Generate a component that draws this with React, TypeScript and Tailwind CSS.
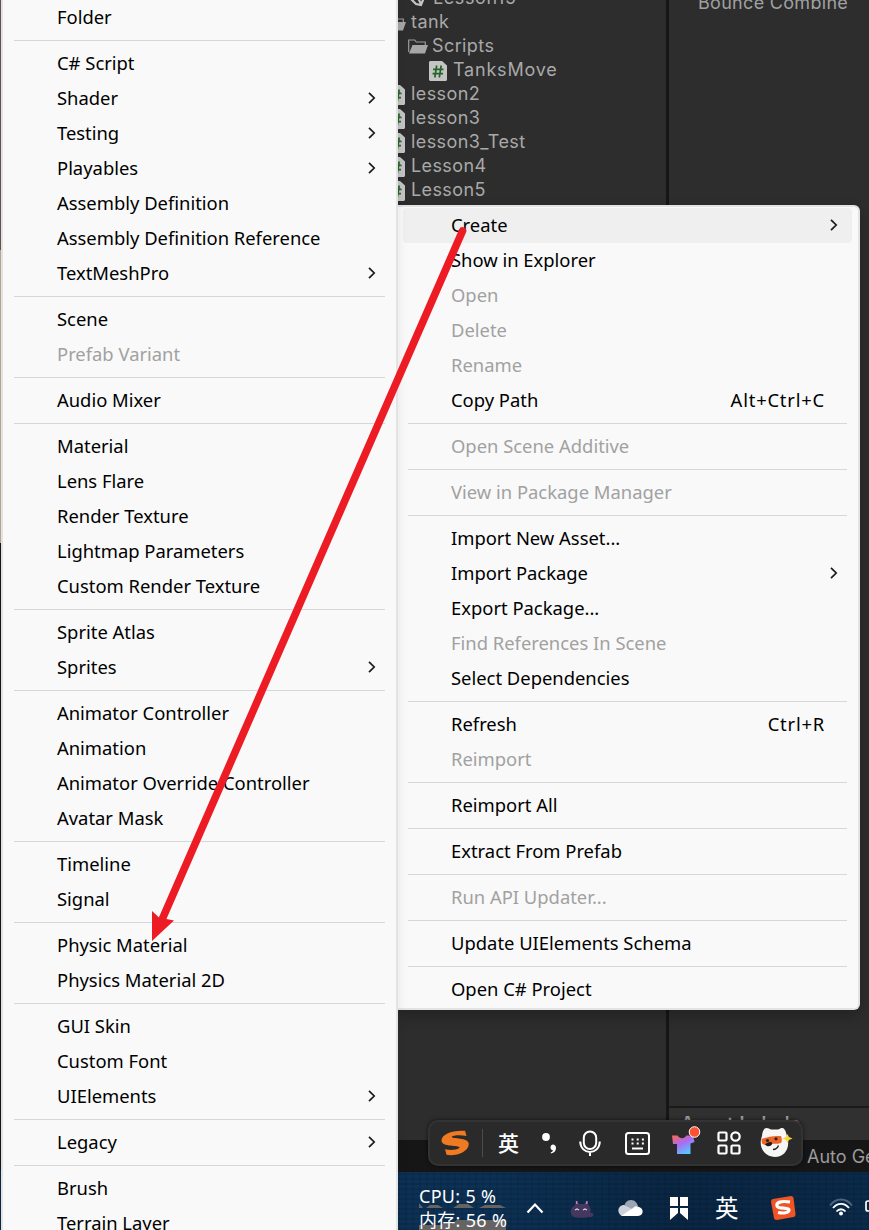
import React from "react";

type Entry = { t: string; off?: boolean; sub?: boolean; key?: string; hot?: boolean } | null;

const i = (t: string): Entry => ({ t });
const off = (t: string): Entry => ({ t, off: true });
const sub = (t: string): Entry => ({ t, sub: true });

const createMenu: Entry[] = [
  i("Folder"), null,
  i("C# Script"), sub("Shader"), sub("Testing"), sub("Playables"), i("Assembly Definition"),
  i("Assembly Definition Reference"), sub("TextMeshPro"), null,
  i("Scene"), off("Prefab Variant"), null,
  i("Audio Mixer"), null,
  i("Material"), i("Lens Flare"), i("Render Texture"), i("Lightmap Parameters"), i("Custom Render Texture"), null,
  i("Sprite Atlas"), sub("Sprites"), null,
  i("Animator Controller"), i("Animation"), i("Animator Override Controller"), i("Avatar Mask"), null,
  i("Timeline"), i("Signal"), null,
  i("Physic Material"), i("Physics Material 2D"), null,
  i("GUI Skin"), i("Custom Font"), sub("UIElements"), null,
  sub("Legacy"), null,
  i("Brush"), i("Terrain Layer"),
];

const assetMenu: Entry[] = [
  { t: "Create", sub: true, hot: true }, i("Show in Explorer"), off("Open"), off("Delete"), off("Rename"),
  { t: "Copy Path", key: "Alt+Ctrl+C" }, null,
  off("Open Scene Additive"), null,
  off("View in Package Manager"), null,
  i("Import New Asset..."), sub("Import Package"), i("Export Package..."), off("Find References In Scene"),
  i("Select Dependencies"), null,
  { t: "Refresh", key: "Ctrl+R" }, off("Reimport"), null,
  i("Reimport All"), null,
  i("Extract From Prefab"), null,
  off("Run API Updater..."), null,
  i("Update UIElements Schema"), null,
  i("Open C# Project"),
];

function Menu({ items }: { items: Entry[] }) {
  return (
    <ul className="flex flex-col">
      {items.map((e, n) =>
        e === null ? (
          <li key={n} className="flex h-[11px] shrink-0 px-[5px] pt-[5px]">
            <div className="h-px w-full bg-[#d7d7d7]" />
          </li>
        ) : (
          <li
            key={n}
            className={
              "flex h-[35px] shrink-0 items-center rounded-[4px] pl-12 pr-[13px] text-[18.4px] leading-[25px] whitespace-nowrap " +
              (e.hot ? "bg-[#efefef] " : "") + (e.off ? "text-[#a1a1a1]" : "text-black")
            }
          >
            <span className="pb-[2px]">{e.t}</span>
            {e.key && <span className="ml-auto pr-[14px] pb-[2px] tracking-[0.8px]">{e.key}</span>}
            {e.sub && (
              <svg className="ml-auto -mt-px" width="10" height="14" viewBox="0 0 10 14" fill="none" stroke="#1b1b1b" strokeWidth="1.700">
                <path d="M2 1.800 7.200 7 2 12.200" />
              </svg>
            )}
          </li>
        ),
      )}
    </ul>
  );
}

function ScriptIcon() {
  return (
    <svg width="18" height="20" viewBox="0 0 18 20" className="shrink-0">
      <path d="M1 0h12l5 4.500V19l-1 1H1l-1-1V1z" fill="#c4c4c4" />
      <path d="M7.700 4.500 5.800 16.500M12.200 4.500l-1.900 12M4 8.300h10.500M3.500 12.700H14" stroke="#276329" strokeWidth="1.700" />
    </svg>
  );
}

function FolderIcon() {
  return (
    <svg width="20" height="15" viewBox="0 0 20 15" className="shrink-0">
      <path d="M.7 13V1h6l1.600 2h9v3" fill="none" stroke="#9c9c9c" strokeWidth="1.200" />
      <path d="M4.500 6H20l-3 8.500H1z" fill="#a6a6a6" />
    </svg>
  );
}

function ProjectTree() {
  return (
    <div className="flex flex-col overflow-hidden text-[18px] leading-6 tracking-[0.4px] text-[#a9a9a9]">
      <div className="flex h-[10px] items-end gap-2 pl-[9px]">
        <svg width="18" height="22" viewBox="0 0 18 22" className="mb-[3px] shrink-0" fill="none" stroke="#c4c4c4" strokeWidth="2.200">
          <path d="M9 1 16 6v9l-2 5-5-1-7-7 8-3M9 9l5 10" />
        </svg>
        <span className="tracking-[0.6px]">Lesson15</span>
      </div>
      <div className="flex h-6 items-center gap-[5px]">
        <span className="-ml-[12px] mt-[3px]"><FolderIcon /></span>
        <span>tank</span>
      </div>
      <div className="flex h-6 items-center gap-[4px] pl-[10px]"><FolderIcon /><span>Scripts</span></div>
      <div className="flex h-6 items-center gap-[6px] pl-[31px]"><span className="mt-px"><ScriptIcon /></span><span className="tracking-[0.8px]">TanksMove</span></div>
      {["lesson2", "lesson3", "lesson3_Test", "Lesson4", "Lesson5"].map((t) => (
        <div key={t} className="flex h-6 items-center gap-[6px]">
          <span className="-ml-[11px] mt-px"><ScriptIcon /></span>
          <span>{t}</span>
        </div>
      ))}
    </div>
  );
}

function SogouS() {
  return (
    <svg width="28" height="26" viewBox="0 0 28 26" className="shrink-0">
      <path
        d="M24 .8 25.500 6C20 4.800 12 5 10.800 6.800 10 8.800 28 7 27.800 14 27.500 22 15 26.500 5.500 24.800L4 19.200c6 1.500 13.500.5 14.500-1.700C19.500 15 .5 17.500.5 10.500.5 4 12-.2 24 .8z"
        fill="#f07a22"
      />
    </svg>
  );
}

function ImeBar() {
  return (
    <div className="absolute left-[428px] top-[1120px] flex h-[46px] w-[375px] items-center rounded-[10px] border-2 border-[#333333] bg-[#2a2a2a] pl-[11px] shadow-[0_0_4px_rgba(0,0,0,0.6)]">
      <SogouS />
      <div className="ml-[13px] h-7 w-px shrink-0 bg-[#4c4c4c]" />
      <span className="ml-[15px] w-[22px] shrink-0 text-[21px] leading-none font-medium text-white">英</span>
      <svg className="ml-[21px] shrink-0" width="16" height="22" viewBox="0 0 16 22" fill="#fff">
        <circle cx="5" cy="5" r="3.900" />
        <path d="M11.700 12.500a3.200 3.200 0 0 1 3.300 3.500c0 3-2 5-5 5.500l-.3-1c1.500-.7 2.200-1.500 2.200-2.300a2.900 2.900 0 0 1-.2-5.700z" />
      </svg>
      <svg className="ml-[22px] shrink-0" width="22" height="26" viewBox="0 0 22 26" fill="none" stroke="#fff" strokeWidth="2">
        <rect x="4.800" y="1.500" width="12.400" height="17.500" rx="6.200" />
        <path d="M1.200 11.500C1.500 25.500 20.500 25.500 20.800 11.500M11 22v4" />
      </svg>
      <svg className="ml-[24px] shrink-0" width="25" height="23" viewBox="0 0 25 23" fill="none" stroke="#fff" strokeWidth="2">
        <rect x="1" y="1" width="23" height="21" rx="2.500" />
        <path d="M6.500 7.500h12.500M6.500 11.500h12.500" strokeDasharray="2 3.200" />
        <path d="M7 16.500h11" />
      </svg>
      <svg className="-mt-[5px] ml-[20px] shrink-0" width="32" height="30" viewBox="0 0 32 30">
        <defs>
          <linearGradient id="shirt" x1="0" y1="0" x2=".6" y2="1">
            <stop offset="0" stopColor="#ff6848" /><stop offset=".5" stopColor="#a96bf5" /><stop offset="1" stopColor="#56c8ff" />
          </linearGradient>
        </defs>
        <path d="M2 9.500h5.500C10 13 14 13 16.500 9.500H23l1.500 6.500-4 1.500V28H7V18H3z" fill="url(#shirt)" />
        <circle cx="24.500" cy="6" r="5.300" fill="#ff5131" stroke="#fff" />
      </svg>
      <svg className="ml-[15px] shrink-0" width="24" height="24" viewBox="0 0 24 24" fill="none" stroke="#fff" strokeWidth="2.200">
        <rect x="1.500" y="1.500" width="8" height="8" rx="1" />
        <circle cx="18.500" cy="5.500" r="4.200" />
        <rect x="1.500" y="14.500" width="8" height="8" rx="1" />
        <rect x="14.500" y="14.500" width="8" height="8" rx="1" />
      </svg>
      <svg className="-mt-[2px] ml-[18px] shrink-0" width="34" height="32" viewBox="0 0 34 32">
        <path d="M3 10C3.500 5 5 2 7.500 2c2 0 3 1 4.500 1.500h7C20.500 3 21.500 1.500 23.500 2c2.500.5 3.500 4 4.500 8 4 12-2.500 21-12 21S-1.500 22 3 10z" fill="#f8f6f5" />
        <path d="M2.500 13c6-2.500 13-3.500 19.500-3 1 2 1 5 .5 6.500-4 2.500-7 .5-9 1.500s-7 2-10.500-.5z" fill="#ed6527" />
        <circle cx="8.500" cy="14.500" r="1.600" fill="#2a2220" /><circle cx="17" cy="12.800" r="1.600" fill="#2a2220" />
        <path d="M6 18.500c2 3 7 2 7-1s-5-1-7 1z" fill="#1c1c1c" />
        <path d="M14 23.500c3 0 4.500-1.500 5.500-4" fill="none" stroke="#1c1c1c" strokeWidth="1.300" />
        <path d="m28.500 8 1.500 3 3.500 1.500-3.500 1.500-1.500 3-1.500-3-3.500-1.500 3.500-1.500z" fill="#f7d640" />
      </svg>
    </div>
  );
}

function Taskbar() {
  return (
    <div className="flex h-[58px] items-start overflow-hidden bg-[linear-gradient(90deg,transparent_20%,rgba(0,5,15,0.25)_60%,rgba(0,5,15,0.15)),repeating-linear-gradient(0deg,rgba(0,0,0,0.1)_0_2px,transparent_2px_5px),repeating-linear-gradient(90deg,rgba(0,10,30,0.08)_0_2px,transparent_2px_7px),linear-gradient(#0c3154,#0c3154)] pl-[21px] text-white">
      <div className="relative h-[58px] w-[92px] shrink-0 pt-[12px] text-[18px] leading-6 tracking-[0.3px] whitespace-nowrap">
        <svg className="absolute left-0 top-[30px]" width="88" height="30" viewBox="0 0 88 30" fill="#666463">
          <path d="M0 6V1l4 5zM7 6l4-3h8l5 3zM34 6l6-4h9l6 4zM60 6l6-3h15l6 3zM0 23h22l4-3 6 2 6-4h49v12H0z" />
        </svg>
        <div className="relative">CPU: 5 %</div>
        <div className="relative">内存: 56 %</div>
      </div>
      <svg className="ml-[15px] mt-[30px] shrink-0" width="18" height="12" viewBox="0 0 18 12" fill="none" stroke="#fff" strokeWidth="2.200">
        <path d="m1.500 10.500 7.500-8 7.500 8" />
      </svg>
      <svg className="ml-[26px] mt-[28px] shrink-0" width="24" height="19" viewBox="0 0 24 19">
        <path d="M5 5 6 1l3 3h5l3-3 2 5c2 2 2 5 1 7 3-1 4 1 3 3-1 1-3 1-4 1-4 1-11 1-15 0-5-2-4-9 1-12z" fill="#46375f" />
        <path d="m6.500 1 .5 3M17 1l-.5 3" stroke="#d283c2" strokeWidth="1.500" />
        <path d="m5 10 2-1 2 1M13 10l2-1 2 1" fill="none" stroke="#c9d8f0" strokeWidth="1.300" />
      </svg>
      <svg className="ml-[24px] mt-[28px] shrink-0" width="25" height="17" viewBox="0 0 25 17">
        <path d="M6 9C6 3 9 0 13 0s6 3 7 6l-8 5z" fill="#9ba5b4" />
        <path d="M1 13c-2-4 1-8 5-8l10 5-4 6H5c-2 0-3-1-4-3z" fill="#cdd2da" />
        <path d="m3 16 12-8c2-2 4-2 6-1 5 1 5 9-1 9z" fill="#fff" />
      </svg>
      <svg className="ml-[27px] mt-[25px] shrink-0" width="18" height="23" viewBox="0 0 18 23" fill="#fff">
        <path d="M0 0h8v9H0zM10 0h8v9h-8zM0 11h8v5l-8 7zM10 11h8v12l-8-7z" />
      </svg>
      <span className="ml-[27px] mt-[24px] w-6 shrink-0 text-[23.5px] leading-6">英</span>
      <svg className="ml-[32px] mt-[24px] shrink-0" width="25" height="24" viewBox="0 0 25 24">
        <path d="M2 3 20 0c2 0 2 1 2.500 2L24.500 18c0 2-1 3-2 3L6 24c-2 0-3-1-3-2L0 6c0-2 1-3 2-3z" fill="#ef5424" />
        <path d="M19 6C10 4.500 5 6.500 6 10s12 1 12 4-6 3.500-11 2.500" fill="none" stroke="#fff" strokeWidth="3.200" />
      </svg>
      <svg className="ml-[33px] mt-[26px] shrink-0" width="24" height="18" viewBox="0 0 24 18" fill="none" strokeWidth="1.800">
        <path d="M1 7.500C7-.5 17-.5 23 7.500" stroke="#4d657c" />
        <path d="M4 10c4.500-5.500 11.500-5.500 16 0M7.500 13.500c2.500-3 6.500-3 9 0" stroke="#fff" />
        <circle cx="12" cy="15.500" r="2" fill="#fff" />
      </svg>
      <svg className="ml-[12px] mt-[27px] shrink-0" width="20" height="14" viewBox="0 0 20 14" fill="none" stroke="#fff" strokeWidth="1.700">
        <rect x="1" y="2" width="18" height="10" rx="2" />
      </svg>
    </div>
  );
}

export default function App() {
  return (
    <div className="relative flex h-[1230px] w-[869px] overflow-hidden bg-[#2d2d2d] font-['Noto_Sans','Noto_Sans_CJK_SC',sans-serif]">
      <div className="relative z-10 w-[398px] shrink-0 bg-[linear-gradient(#5d5250_0_250px,#b2a58f_250px_543px,#151515_543px_1170px,#0b2547_1170px)] shadow-[0_0_10px_rgba(0,0,0,0.09)]">
        <div className="ml-px h-full border-x-2 border-[#e3e3e3] bg-[#f9f9f9] pl-[6px] pr-[6px]">
          <Menu items={createMenu} />
        </div>
      </div>
      <div className="flex min-w-0 flex-1 flex-col font-[Inter,'Noto_Sans_CJK_SC',sans-serif]">
        <div className="flex h-[1140px] shrink-0">
          <div className="w-[268px] shrink-0"><ProjectTree /></div>
          <div className="w-[3px] shrink-0 bg-[#161616]" />
          <div className="flex flex-1 flex-col justify-between text-[#a0a0a0]">
            <div className="-mt-[9px] pl-[29px] text-[18px] leading-6 tracking-[0.3px] whitespace-nowrap">Bounce Combine</div>
            <div className="h-[34px] border-t-2 border-[#1b1b1b] bg-[#303030] pl-[12px] pt-[4px] text-[18px] leading-6 font-semibold tracking-[0.7px]">Asset Labels</div>
          </div>
        </div>
        <div className="h-8 shrink-0 bg-[#161616] pl-[409px] pt-[5px] text-[18px] leading-6 whitespace-nowrap text-[#9b9b9b]">Auto Generate</div>
        <div className="font-['Noto_Sans','Noto_Sans_CJK_SC',sans-serif]"><Taskbar /></div>
      </div>
      <div className="absolute left-[398px] top-[205px] h-[805px] w-[462px] rounded-r-[6px] border-y-2 border-r-2 border-[#e3e3e3] bg-[#f9f9f9] pl-[5px] pr-[6px] pt-px shadow-[0_6px_14px_rgba(0,0,0,0.25)]">
        <Menu items={assetMenu} />
      </div>
      <ImeBar />
      <svg className="absolute left-0 top-0 z-20" width="869" height="1230" viewBox="0 0 869 1230">
        <path d="M462.500 231 161 922" stroke="#ed1c24" strokeWidth="7.600" strokeLinecap="round" />
        <path d="M152 911 159 917.500 174 920.500 152 941z" fill="#ed1c24" />
      </svg>
    </div>
  );
}
